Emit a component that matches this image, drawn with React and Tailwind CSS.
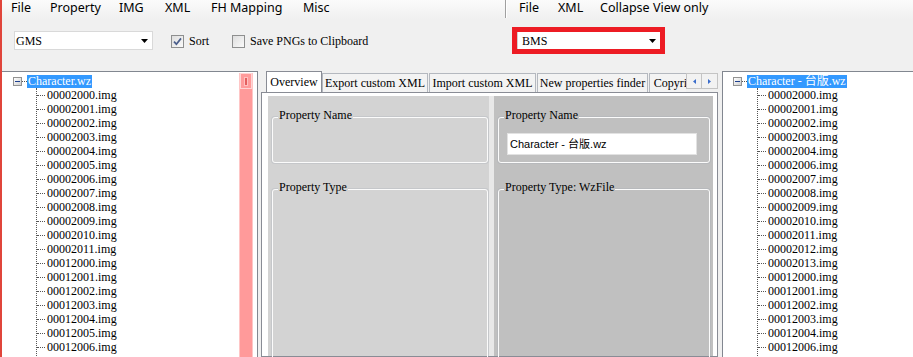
const serif = "font-['Liberation_Serif','Noto_Sans_CJK_TC',serif]";
const sans = "font-['Noto_Sans','Noto_Sans_CJK_TC',sans-serif]";

const leftItems = [
  '00002000', '00002001', '00002002', '00002003', '00002004', '00002005', '00002006',
  '00002007', '00002008', '00002009', '00002010', '00002011', '00012000', '00012001',
  '00012002', '00012003', '00012004', '00012005', '00012006', '00012007',
];

const rightItems = [
  '00002000', '00002001', '00002002', '00002003', '00002004', '00002006', '00002007',
  '00002008', '00002009', '00002010', '00002011', '00002012', '00002013', '00012000',
  '00012001', '00012002', '00012003', '00012004', '00012006', '00012007',
];

function ComboArrow() {
  return (
    <svg width="7" height="4" viewBox="0 0 7 4">
      <path d="M0 0h7L3.5 4z" fill="#000" />
    </svg>
  );
}

function Checkbox({ checked, label }) {
  return (
    <div className="flex items-center gap-[5px]">
      <div className="flex h-[13px] w-[13px] items-center justify-center border border-[#8e8f8f] bg-gradient-to-br from-[#dedede] to-[#fafafa]">
        {checked && (
          <svg width="9" height="9" viewBox="0 0 9 9">
            <path d="M1 4.6l2.4 2.6L8 1.4" stroke="#4b5f8c" strokeWidth="1.7" fill="none" />
          </svg>
        )}
      </div>
      <span className={`text-[12px] leading-[14px] whitespace-nowrap ${serif}`}>{label}</span>
    </div>
  );
}

function Tree({ root, items, boxLeft }) {
  return (
    <div className={`pt-[2px] text-[12px] text-black ${serif}`}>
      <div className="flex h-[14px] items-center">
        <div className={`${boxLeft} flex h-[9px] w-[9px] items-center justify-center border border-[#929292] bg-gradient-to-br from-white to-[#cfcfcf]`}>
          <div className="h-px w-[5px] bg-[#1d3f8f]" />
        </div>
        <div className="w-[4px] flex-1 max-w-[5px] border-t border-dotted border-[#555]" />
        <span className="bg-[#3399ff] px-[1px] leading-[13px] whitespace-nowrap text-white">{root}</span>
      </div>
      <div className="ml-[34px] border-l border-dotted border-[#555]">
        {items.map((n) => (
          <div key={n} className="flex h-[14px] items-center">
            <div className="w-[8px] border-t border-dotted border-[#555]" />
            <span className="ml-[2px] leading-[14px] whitespace-nowrap">{n}.img</span>
          </div>
        ))}
      </div>
    </div>
  );
}

function GroupBox({ label, labelBg, className, children }) {
  return (
    <div className={`relative rounded-[3px] border border-[#fbfbfb] shadow-[0_0_0_1px_rgba(150,160,175,0.22)] ${className}`}>
      <span className={`absolute left-[5px] top-[-10px] px-[1px] text-[12px] leading-[14px] whitespace-nowrap ${serif} ${labelBg}`}>
        {label}
      </span>
      {children}
    </div>
  );
}

function Tab({ label, width }) {
  return (
    <div className={`${width} flex h-[19px] shrink-0 justify-center border-x border-t border-[#b4b8bf] bg-[#f3f3f3] pt-[2px]`}>
      <span className={`text-[12px] leading-[14px] whitespace-nowrap ${serif}`}>{label}</span>
    </div>
  );
}

export default function App() {
  return (
    <div className="flex h-[357px] w-[913px] flex-col overflow-hidden border-l-2 border-[#e0453b] bg-[#f0f0f0] text-black">
      {/* menus + toolbars */}
      <div className="flex h-[71px] shrink-0">
        <div className="w-[503px]">
          <div className={`flex h-[19px] bg-gradient-to-b from-[#fbfbfb] to-[#f0f0f0] pl-[9px] text-[12.5px] leading-[16px] ${sans}`}>
            <span className="w-[39px]">File</span>
            <span className="w-[69px]">Property</span>
            <span className="w-[46px]">IMG</span>
            <span className="w-[46px]">XML</span>
            <span className="w-[92px]">FH Mapping</span>
            <span>Misc</span>
          </div>
          <div className="flex items-start pl-[12px] pt-[12px]">
            <div className="flex h-[19px] w-[139px] items-center justify-between border border-[#d9d9d9] bg-white pl-[1px] pr-[4px]">
              <span className={`text-[12px] leading-[14px] ${serif}`}>GMS</span>
              <ComboArrow />
            </div>
            <div className="ml-[18px] mt-[3px] w-[61px]">
              <Checkbox checked label="Sort" />
            </div>
            <div className="mt-[3px]">
              <Checkbox label="Save PNGs to Clipboard" />
            </div>
          </div>
        </div>
        <div className="flex-1">
          <div className={`flex h-[19px] bg-gradient-to-b from-[#fbfbfb] to-[#f0f0f0] text-[12.5px] leading-[16px] ${sans}`}>
            <div className="h-[18px] w-[2px] border-l border-r border-l-[#a0a0a0] border-r-white" />
            <div className="flex pl-[12px]">
              <span className="w-[39px]">File</span>
              <span className="w-[42px]">XML</span>
              <span className="whitespace-nowrap">Collapse View only</span>
            </div>
          </div>
          <div className="pl-[7px] pt-[8px]">
            <div className="h-[27px] w-[153px] border-[5px] border-[#ed1c24]">
              <div className="flex h-full items-center justify-between border-l border-[#d0d0d0] bg-white pl-[4px] pr-[4px]">
                <span className={`text-[12px] leading-[14px] ${serif}`}>BMS</span>
                <ComboArrow />
              </div>
            </div>
          </div>
        </div>
      </div>

      {/* main area */}
      <div className="flex min-h-0 flex-1">
        {/* left tree */}
        <div className="flex w-[256px] shrink-0 overflow-hidden border-r border-t border-[#828790] bg-white">
          <div className="min-w-0 flex-1 overflow-hidden">
            <Tree root="Character.wz" items={leftItems} boxLeft="ml-[11px]" />
          </div>
          <div className="mr-[4px] mt-[1px] flex w-[14px] flex-col border-x border-[#ffc6c6] bg-[#ff9a9a]">
            <div className="flex h-[16px] justify-center border border-[#ffd4d4] bg-[#ff9a9a] pt-[3px]">
              <div className="h-[9px] w-[4px] border border-[#ffc0c0] bg-[#e35f5f]" />
            </div>
          </div>
        </div>

        {/* tab control */}
        <div className="ml-[3px] flex w-[457px] shrink-0 flex-col">
          <div className="relative z-10 flex h-[21px]">
            <div className="flex min-w-0 flex-1 items-end overflow-hidden pl-[5px]">
              <div className="-mb-px flex h-[22px] w-[56px] shrink-0 justify-center border-x border-t border-[#898c95] bg-white pt-[3px]">
                <span className={`text-[12px] leading-[14px] ${serif}`}>Overview</span>
              </div>
              <Tab label="Export custom XML" width="w-[106px]" />
              <Tab label="Import custom XML" width="ml-px w-[107px]" />
              <Tab label="New properties finder" width="ml-px w-[111px]" />
              <Tab label="Copyright" width="ml-px w-[58px]" />
            </div>
            <div className="mt-[2px] flex h-[16px]">
              <div className="flex w-[16px] items-center justify-center border border-[#c4c4c4] bg-[#f2f2f2]">
                <svg width="3" height="5" viewBox="0 0 3 5"><path d="M3 0v5L0 2.5z" fill="#3a6ccb" /></svg>
              </div>
              <div className="flex w-[16px] items-center justify-center border border-l-0 border-[#c4c4c4] bg-[#f2f2f2]">
                <svg width="3" height="5" viewBox="0 0 3 5"><path d="M0 0v5l3-2.5z" fill="#3a6ccb" /></svg>
              </div>
            </div>
          </div>
          <div className="min-h-0 flex-1 border border-[#898c95] bg-white pl-[6px] pr-[4px] pt-[3px]">
            <div className="flex h-full">
              <div className="w-[221px] shrink-0 bg-[#d3d3d3] pl-[4px] pt-[21px]">
                <GroupBox label="Property Name" labelBg="bg-[#d3d3d3]" className="h-[46px] w-[216px]" />
                <GroupBox label="Property Type" labelBg="bg-[#d3d3d3]" className="mt-[26px] h-[240px] w-[216px]" />
              </div>
              <div className="w-[5px] shrink-0 bg-[#e8e8e8]" />
              <div className="flex-1 bg-[#c0c0c0] pl-[4px] pt-[21px]">
                <GroupBox label="Property Name" labelBg="bg-[#c0c0c0]" className="h-[46px] w-[212px]">
                  <div className="ml-[8px] mt-[15px] flex h-[22px] w-[190px] items-center border border-[#e2e2e2] bg-white pl-[2px]">
                    <span className="font-['Liberation_Sans','Noto_Sans_CJK_TC',sans-serif] text-[11px] leading-[14px] whitespace-nowrap">
                      Character - 台版.wz
                    </span>
                  </div>
                </GroupBox>
                <GroupBox label="Property Type: WzFile" labelBg="bg-[#c0c0c0]" className="mt-[26px] h-[240px] w-[212px]" />
              </div>
            </div>
          </div>
        </div>

        {/* right tree */}
        <div className="ml-[4px] min-w-0 flex-1 overflow-hidden border-l border-t border-[#828790] bg-white">
          <Tree root="Character - 台版.wz" items={rightItems} boxLeft="ml-[10px]" />
        </div>
      </div>
    </div>
  );
}
